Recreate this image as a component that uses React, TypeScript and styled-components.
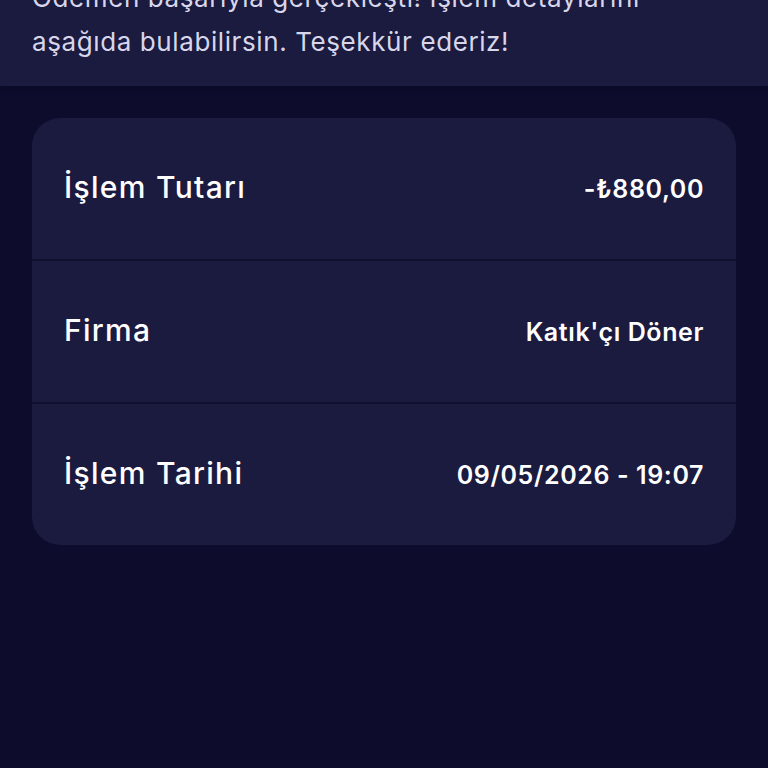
import React from 'react';
import styled, { createGlobalStyle } from 'styled-components';

const GlobalStyle = createGlobalStyle`
    html, body {
        margin:0;
        padding:0;
        background-color:#0d0c2c;
    }
    body {
        font-family:Inter, "Open Sans", sans-serif;
        overflow:hidden;
    }
`

const Page = styled.div`
    width:100%;
    height:768px;
    background-color:#0d0c2c;
    overflow:hidden;
`
const Header = styled.div`
    background-color:#1b1a3f;
    padding:0px 32px 22px 32px;
    box-shadow:0 2px 6px rgba(10,9,35,0.6);
`
const Message = styled.p`
    margin:-24px 0 0 0;
    font-size:26px;
    line-height:44px;
    font-weight:400;
    letter-spacing:0.6px;
    color:#d7d6ea;
`
const Card = styled.div`
    margin:32px 32px 0 32px;
    background-color:#1b1a3f;
    border-radius:28px;
    overflow:hidden;
`
const Row = styled.div<{ $last?: boolean }>`
    height:141px;
    padding:0px 32px;
    display:flex;
    align-items:center;
    justify-content:space-between;
    border-bottom:${p => (p.$last ? 'none' : '2px solid #111030')};
`
const Label = styled.span`
    font-size:30px;
    font-weight:500;
    letter-spacing:1.3px;
    color:#ffffff;
    margin-top:-4px;
`
const Value = styled.span`
    font-size:25px;
    font-weight:600;
    letter-spacing:0.6px;
    color:#ffffff;
`

const rows = [
  { label: 'İşlem Tutarı', value: '-₺880,00' },
  { label: 'Firma', value: "Katık'çı Döner" },
  { label: 'İşlem Tarihi', value: '09/05/2026 - 19:07' },
]

const App = () => {
  return (
    <Page>
      <GlobalStyle />
      <Header>
        <Message>
          Ödemen başarıyla gerçekleşti! İşlem detaylarını aşağıda bulabilirsin. Teşekkür ederiz!
        </Message>
      </Header>
      <Card>
        {rows.map((r, i) => (
          <Row key={r.label} $last={i === rows.length - 1}>
            <Label>{r.label}</Label>
            <Value>{r.value}</Value>
          </Row>
        ))}
      </Card>
    </Page>
  )
}

export default App
